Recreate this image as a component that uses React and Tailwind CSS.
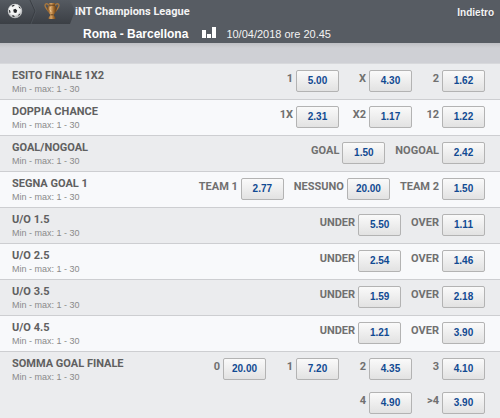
import React from 'react';

const markets = [
    { name: 'ESITO FINALE 1X2', rows: [[['1', '5.00'], ['X', '4.30'], ['2', '1.62']]] },
    { name: 'DOPPIA CHANCE', rows: [[['1X', '2.31'], ['X2', '1.17'], ['12', '1.22']]] },
    { name: 'GOAL/NOGOAL', rows: [[['GOAL', '1.50'], ['NOGOAL', '2.42']]] },
    { name: 'SEGNA GOAL 1', rows: [[['TEAM 1', '2.77'], ['NESSUNO', '20.00'], ['TEAM 2', '1.50']]] },
    { name: 'U/O 1.5', rows: [[['UNDER', '5.50'], ['OVER', '1.11']]] },
    { name: 'U/O 2.5', rows: [[['UNDER', '2.54'], ['OVER', '1.46']]] },
    { name: 'U/O 3.5', rows: [[['UNDER', '1.59'], ['OVER', '2.18']]] },
    { name: 'U/O 4.5', rows: [[['UNDER', '1.21'], ['OVER', '3.90']]] },
    {
        name: 'SOMMA GOAL FINALE',
        rows: [
            [['0', '20.00'], ['1', '7.20'], ['2', '4.35'], ['3', '4.10']],
            [['4', '4.90'], ['>4', '3.90']],
        ],
    },
];

const BallIcon = () => (
    <svg viewBox="0 0 16 16" className="w-4 h-4">
        <defs>
            <radialGradient id="ball" cx="45%" cy="35%" r="65%">
                <stop offset="0.6" stopColor="#f4f5f5" />
                <stop offset="1" stopColor="#a4a6a8" />
            </radialGradient>
        </defs>
        <circle cx="8" cy="8" r="7" fill="url(#ball)" />
        <g fill="#222427">
            <path d="M6.2 6.8 8.4 5.8 10.2 7.4 9.2 9.9 6.8 9.6Z" />
            <path d="M4.6 2.6 7.6 1.8 7.2 3 5 3.8Z" />
            <path d="M11.6 3 13.4 4.6 13.6 6 12 4.8Z" />
            <path d="M1.8 7 3 7.2 3.6 9.2 2.6 10.2Z" />
            <path d="M5.2 12.2 7 12.6 7.8 14 5.4 13.6Z" />
            <path d="M11.6 11.4 13.2 10.4 12.6 12 11.4 13Z" />
        </g>
        <circle cx="8" cy="8" r="6.8" fill="none" stroke="#c9cbcd" strokeWidth="0.6" />
    </svg>
);

const TrophyIcon = () => (
    <svg viewBox="0 0 16 18" className="w-4 h-[18px]">
        <defs>
            <linearGradient id="cup" x1="0" x2="1">
                <stop offset="0" stopColor="#7a4c1c" />
                <stop offset="0.4" stopColor="#d8a466" />
                <stop offset="0.7" stopColor="#9a6428" />
                <stop offset="1" stopColor="#5b3512" />
            </linearGradient>
        </defs>
        <path
            d="M4.8 3.4C3.6 1.2 1 1.2 1 3.6 1 6 3.2 6.8 4.6 9.4M11.2 3.4C12.4 1.2 15 1.2 15 3.6 15 6 12.8 6.8 11.4 9.4"
            fill="none"
            stroke="#a8783f"
            strokeWidth="1.4"
        />
        <path
            d="M5 1H11L10.6 3.2Q13.4 5.4 12.4 8.2 11.6 10.8 9.8 12.4L9.8 13.6 11.4 15.6V17H4.6V15.6L6.2 13.6 6.2 12.4Q4.4 10.8 3.6 8.2 2.6 5.4 5.4 3.2Z"
            fill="url(#cup)"
        />
        <path d="M5.2 3.2H10.8M6.6 12.8H9.4" stroke="#5f3a17" strokeWidth="0.9" />
        <path d="M6.2 5Q5.4 7.4 7 10" stroke="#f0cf9c" strokeWidth="0.9" fill="none" />
    </svg>
);

const Crumbs = () => (
    <div className="relative w-[75px] h-6 shrink-0">
        <svg viewBox="0 0 75 24" className="absolute inset-0 w-full h-full">
            <defs>
                <linearGradient id="crumb" x1="0" x2="0" y1="0" y2="1">
                    <stop offset="0" stopColor="#555a61" />
                    <stop offset="1" stopColor="#3b3f45" />
                </linearGradient>
            </defs>
            <path d="M0 0H70L75 11 70 24H0Z" fill="url(#crumb)" />
            <path d="M30 0 35 11 30 24" fill="none" stroke="#3a3e44" />
            <path d="M31 0 36 11 31 24" fill="none" stroke="#5a5f66" strokeOpacity="0.5" />
        </svg>
        <div className="relative flex items-center h-[22px] pl-[7px] gap-[21px]">
            <BallIcon />
            <TrophyIcon />
        </div>
    </div>
);

const Odd = ({ id, label, value }) => (
    <div className="flex pl-[10px] gap-[3px]">
        <label
            htmlFor={id}
            className="min-w-[17px] text-right font-[Roboto,sans-serif] text-[11px] leading-[18px] font-bold text-[#707070] whitespace-nowrap"
        >
            {label}
        </label>
        <button
            id={id}
            type="button"
            className="w-[43px] h-[22px] rounded-[2px] border border-[#b3b3b3] bg-linear-to-b from-[#fafafa] to-[#e2e2e2] text-[10px] leading-[20px] font-bold text-[#114a92] text-center"
        >
            {value}
        </button>
    </div>
);

const Market = ({ market, index }) => (
    <section className="flex justify-between pl-3 pr-[15px] pt-[6px] pb-[7px] border-b border-[#cdced1] odd:bg-[#ebecee] even:bg-[#f8f9fb] last:border-b-0">
        <div className="h-[22px] whitespace-nowrap">
            <h2 className="font-[Roboto,sans-serif] text-[11px] leading-[12px] font-bold text-[#606060]">
                {market.name}
            </h2>
            <p className="text-[9px] leading-[15px] text-[#8a8a8a]">Min - max: 1 - 30</p>
        </div>
        <div className="flex flex-col gap-3">
            {market.rows.map((row, r) => (
                <div key={r} className="flex justify-end">
                    {row.map(([label, value]) => (
                        <Odd key={label} id={`odd-${index}-${label}`} label={label} value={value} />
                    ))}
                </div>
            ))}
        </div>
    </section>
);

export default function App() {
    return (
        <div className="min-h-screen bg-[#ebecee] font-['Liberation_Sans',Arial,sans-serif]">
            <header className="h-[43px] bg-[#575c63] text-[#f3f3f3]">
                <div className="flex items-center h-6">
                    <Crumbs />
                    <h1 className="font-[Roboto,sans-serif] text-[11px] font-bold whitespace-nowrap">
                        iNT Champions League
                    </h1>
                    <a href="#indietro" className="ml-auto pr-[6px] text-[10px] font-bold text-shadow-sm">
                        Indietro
                    </a>
                </div>
                <div className="flex items-center h-[19px] pl-[83px] whitespace-nowrap">
                    <span className="text-[12px] leading-[18px] font-bold text-white">Roma - Barcellona</span>
                    <svg viewBox="0 0 14 11" className="w-[14px] h-[11px] ml-[14px] mb-[3px]" fill="#ffffff">
                        <path d="M0 3H4V11H0ZM5 7H9V11H5ZM10 0H14V11H10Z" />
                    </svg>
                    <time dateTime="2018-04-10T20:45" className="ml-[10px] text-[11px] leading-[18px]">
                        10/04/2018 ore 20.45
                    </time>
                </div>
            </header>
            <div className="h-[21px] bg-linear-to-b from-[#bfc0c4] to-[#cfd0d5] to-25% border-b border-[#d8d9dc]" />
            <main>
                {markets.map((market, i) => (
                    <Market key={market.name} market={market} index={i} />
                ))}
            </main>
        </div>
    );
}
